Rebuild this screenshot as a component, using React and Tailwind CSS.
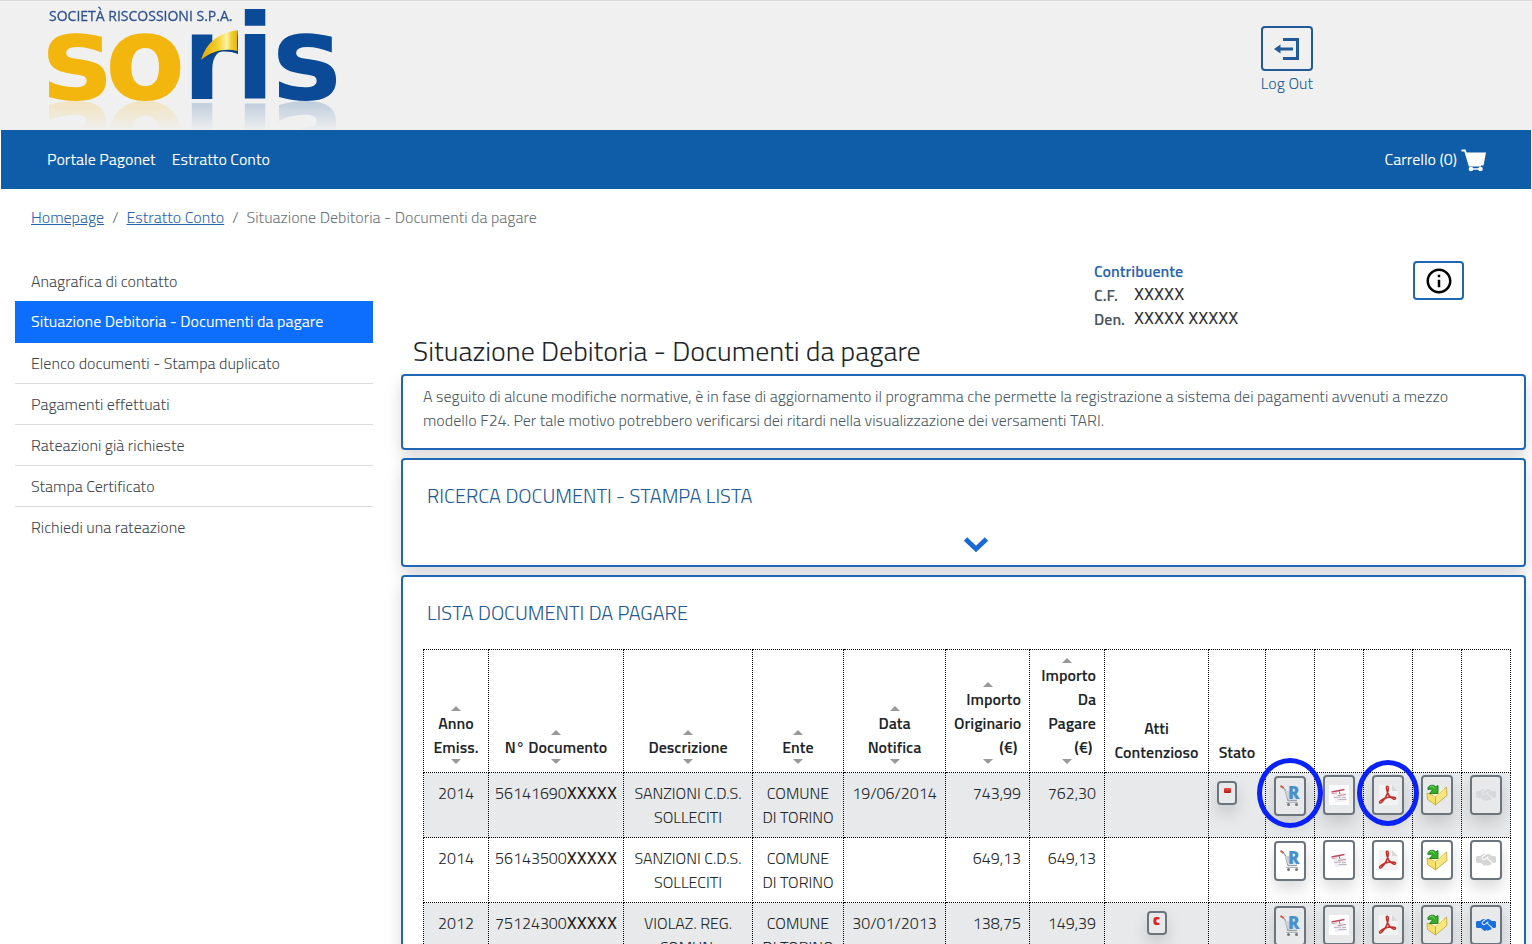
import { FaHandshakeSimple } from 'react-icons/fa6'
import { MdInfoOutline } from 'react-icons/md'

const menu = [
  'Anagrafica di contatto',
  'Situazione Debitoria - Documenti da pagare',
  'Elenco documenti - Stampa duplicato',
  'Pagamenti effettuati',
  'Rateazioni già richieste',
  'Stampa Certificato',
  'Richiedi una rateazione',
]

const columns = [
  { lines: ['Anno', 'Emiss.'], sort: true, align: 'text-center' },
  { lines: ['N° Documento'], sort: true, align: 'text-center' },
  { lines: ['Descrizione'], sort: true, align: 'text-center' },
  { lines: ['Ente'], sort: true, align: 'text-center' },
  { lines: ['Data', 'Notifica'], sort: true, align: 'text-center' },
  { lines: ['Importo', 'Originario', '(€)\u00a0'], sort: true, align: 'text-right' },
  { lines: ['Importo', 'Da', 'Pagare', '(€)\u00a0'], sort: true, align: 'text-right' },
  { lines: ['Atti', 'Contenzioso'], sort: false, align: 'text-center' },
  { lines: ['Stato'], sort: false, align: 'text-center' },
]

const rows = [
  { anno: '2014', num: '56141690', descr: 'SANZIONI C.D.S. SOLLECITI', ente: 'COMUNE DI TORINO', data: '19/06/2014', orig: '743,99', pagare: '762,30', stato: true, marked: true, deal: 'text-[#d6d9dc]' },
  { anno: '2014', num: '56143500', descr: 'SANZIONI C.D.S. SOLLECITI', ente: 'COMUNE DI TORINO', data: '', orig: '649,13', pagare: '649,13', deal: 'text-[#d6d6d6]' },
  { anno: '2012', num: '75124300', descr: 'VIOLAZ. REG. COMUN.', ente: 'COMUNE DI TORINO', data: '30/01/2013', orig: '138,75', pagare: '149,39', atti: true, deal: 'text-[#1a6fe0]' },
]

const cell = 'border border-dotted border-black'

function Logo() {
  return (
    <svg
      width="300"
      height="100"
      viewBox="0 0 300 100"
      role="img"
      aria-label="Soris - Società Riscossioni S.p.A."
      className="[-webkit-box-reflect:below_0px_linear-gradient(transparent_70%,rgba(255,255,255,0.22))]"
    >
      <defs>
        <linearGradient id="gold" x1="0" y1="0" x2="1" y2="0">
          <stop offset="0" stopColor="#e3a70c" />
          <stop offset="0.45" stopColor="#f4cf2a" />
          <stop offset="0.7" stopColor="#fdf3a8" />
          <stop offset="0.82" stopColor="#f0cf2e" />
          <stop offset="1" stopColor="#e0b017" />
        </linearGradient>
      </defs>
      <text x="9" y="20" fontFamily='"Open Sans", sans-serif' fontSize="14" fill="#2f5290" stroke="#2f5290" strokeWidth="0.300">SOCIETÀ RISCOSSIONI S.P.A.</text>
      <g fontFamily='"DejaVu Sans", sans-serif' fontWeight="700" fontSize="117">
        <g fill="#f2b60f">
          <text x="2" y="98">s</text>
          <text x="65" y="98">o</text>
        </g>
        <g fill="#0a4a96">
          <text x="142" y="98">r</text>
          <text x="195" y="98">i</text>
          <text x="232" y="98">s</text>
        </g>
      </g>
      <path d="M173 32L202 28V30H197.500V60H202V30L198 28V54C188 49 178 50 173 53Z" fill="#f0f0f0" />
      <path d="M163 56C173 38 183 33 198 30V53C188 49 176 50 172 55Z" fill="#0a3f80" />
      <path d="M161 59C166 42 178 32 198 29C197 37 197 44 197.500 50C186 47 173 49 161 59Z" fill="url(#gold)" />
    </svg>
  )
}

function LogOutIcon() {
  return (
    <svg width="26" height="24" viewBox="0 0 26 24" fill="none" aria-hidden="true">
      <path d="M9 2.500H23.500V21.500H9" stroke="#225a95" strokeWidth="3" />
      <path d="M5 12H19" stroke="#225a95" strokeWidth="3" />
      <path d="M0 12L6.500 7.500V16.500Z" fill="#225a95" />
    </svg>
  )
}

function CartIcon() {
  return (
    <svg width="26" height="23" viewBox="0 0 26 23" className="mt-1" aria-hidden="true">
      <path d="M0.500 1.500H4L8.500 16.500H20" fill="none" stroke="#fff" strokeWidth="1.800" />
      <path d="M4.500 3.500H25L22.500 16.500H8.500Z" fill="#fff" />
      <circle cx="10" cy="20" r="2.300" fill="#fff" />
      <circle cx="19.500" cy="20" r="2.300" fill="#fff" />
      <path d="M10 20H19" stroke="#fff" strokeWidth="1.500" />
    </svg>
  )
}

function Sort({ down }) {
  return (
    <svg width="10" height="5" viewBox="0 0 10 5" className="mx-auto block" aria-hidden="true">
      <path d={down ? 'M0 0H10L5 5Z' : 'M0 5H10L5 0Z'} fill="#999" />
    </svg>
  )
}

function CartRIcon() {
  return (
    <svg width="20" height="22" viewBox="0 0 20 22" aria-hidden="true">
      <path d="M2.500 2L5 4.500L8 15.500H17" fill="none" stroke="#9aa3ab" strokeWidth="1.300" />
      <path d="M5 6H17L16.500 13.500H7.500Z" fill="#c9d3dc" />
      <path d="M0.500 0.800L3.500 3" stroke="#d2604f" strokeWidth="2" />
      <text x="8" y="14" fontFamily='"Open Sans", sans-serif' fontWeight="800" fontSize="17" fill="#4a8fca">R</text>
      <path d="M6 17.500H18" stroke="#b4b9be" strokeWidth="1" />
      <circle cx="8.500" cy="19.500" r="1.500" fill="#777" />
      <circle cx="16.500" cy="19.500" r="1.500" fill="#777" />
    </svg>
  )
}

function BulletinIcon() {
  return (
    <svg width="20" height="20" viewBox="0 0 20 20" aria-hidden="true">
      <rect width="20" height="20" fill="#fdfdfd" />
      <path d="M4 9L15 6.500L18 15.500L6.500 17.500Z" fill="#f0eef2" />
      <path d="M2.500 7L15.500 4.500" stroke="#bf4a5e" strokeWidth="1.500" />
      <path d="M2.500 8.800L8 7.800" stroke="#d9a0aa" strokeWidth="1" />
      <path d="M10 6L11 9" stroke="#c05a6b" strokeWidth="1" />
      <path d="M9 10.500L17 9.500" stroke="#c28a98" strokeWidth="1" />
      <path d="M5 12.500L12 12M9.500 14.500L17.500 14.500M13 12.500H17" stroke="#b9b5c2" strokeWidth="1" />
    </svg>
  )
}

function PdfIcon() {
  return (
    <svg width="20" height="20" viewBox="0 0 20 20" aria-hidden="true">
      <path d="M1 0H14L20 6V20H1Z" fill="#f3f2f2" />
      <path d="M14 0V6H20Z" fill="#dadada" />
      <path d="M8.500 1.500C10.500 0.500 10.500 3 10 6C9 11 6 15 3.500 17.500C2 18.800 0.500 17.500 2.500 15.800C6 13 12 11.500 16.500 12.200C18.500 12.800 17.500 15 15.500 14C12 12.500 9.500 8.500 8.800 5C8.300 3 8 2 8.500 1.500Z" fill="none" stroke="#c2302c" strokeWidth="1.500" />
    </svg>
  )
}

function FolderIcon() {
  return (
    <svg width="22" height="22" viewBox="0 0 22 22" aria-hidden="true">
      <path d="M1 9L9.500 12L9.500 21L1.500 15.500Z" fill="#f5e06c" stroke="#c2a436" strokeWidth="0.800" />
      <path d="M9.500 12.500L20.500 3L21 11.500L9.500 21Z" fill="#f8e680" stroke="#c2a436" strokeWidth="0.800" />
      <path d="M12 7L16 4.500L18 5L9.500 12.500L4 9.500Z" fill="#fdf7cc" />
      <path d="M2 3.500C4 0.500 8.500 0.500 9.500 3L12 1.500V9.500H3.500L6 6.500C5 5 3.500 4.800 2 5.800Z" fill="#35ad28" stroke="#1d7a1b" strokeWidth="0.900" />
      <path d="M4 2.800C6 1.800 7.500 2.300 8.500 4.500" fill="none" stroke="#8fe07f" strokeWidth="0.900" />
    </svg>
  )
}

function ActionCell({ label, first, marked, children }) {
  return (
    <td className={`${cell} p-0 align-top`}>
      <div className={`relative flex justify-center ${first ? 'pt-[3px]' : 'pt-0.5'}`}>
        <button type="button" aria-label={label} className="flex h-10 w-8 items-center justify-center rounded border-2 border-[#6c757d] shadow-[0_8px_16px_rgba(0,0,0,0.15)]">
          {children}
        </button>
        {marked && (
          <span className={`pointer-events-none absolute left-1/2 z-10 -translate-x-1/2 rounded-[50%] border-[5px] border-[#0a22f5] ${first ? '-top-[15px] h-[70px] w-[66px]' : '-top-[13px] h-[66px] w-[62px]'}`} />
        )}
      </div>
    </td>
  )
}

function SmallButton({ label, children }) {
  return (
    <button type="button" aria-label={label} className="inline-flex h-6 w-5 items-start justify-center rounded border-2 border-[#6c757d] pt-0.5 align-top shadow-[0_8px_16px_rgba(0,0,0,0.15)]">
      {children}
    </button>
  )
}

function Panel({ className, children }) {
  return (
    <section className={`rounded border-2 border-[#1f67b5] bg-white shadow-[0_8px_16px_rgba(0,0,0,0.15)] ${className}`}>
      {children}
    </section>
  )
}

export default function App() {
  return (
    <div className="bg-white font-['Titillium_Web',Roboto,sans-serif] text-base leading-6 text-[#212529]">
      <header className="flex h-[130px] items-start justify-between border-t border-[#d9dcdf] bg-[#f0f0f0] pl-10 pr-[219px]">
        <Logo />
        <a href="#logout" className="flex flex-col items-center pt-[25px] font-light text-[#225a95]">
          <span className="flex h-[45px] w-[52px] items-center justify-center rounded border-2 border-[#225a95]">
            <LogOutIcon />
          </span>
          Log Out
        </a>
      </header>

      <nav className="relative mx-px flex h-[59px] items-center justify-between bg-[#0f5da9] pb-0.5 pl-[46px] pr-11 text-white">
        <div className="flex gap-4">
          <a href="#portale">Portale Pagonet</a>
          <a href="#estratto">Estratto Conto</a>
        </div>
        <a href="#carrello" className="flex items-center gap-1">
          Carrello (0)
          <CartIcon />
        </a>
      </nav>

      <ol className="mb-[30px] flex gap-2 px-[31px] pt-4 font-light text-[#6c757d]">
        <li><a href="#home" className="text-[#2a66b0] underline">Homepage</a></li>
        <li aria-hidden="true">/</li>
        <li><a href="#estratto" className="text-[#2a66b0] underline">Estratto Conto</a></li>
        <li aria-hidden="true">/</li>
        <li>Situazione Debitoria - Documenti da pagare</li>
      </ol>

      <div className="flex items-start gap-7 pl-[15px] pr-1.5">
        <ul className="w-[358px] shrink-0 pt-0.5">
          {menu.map((item, i) => (
            <li key={item}>
              <a
                href={`#menu-${i}`}
                className={`block px-4 py-2 ${i === 1 ? 'h-[42px] bg-[#0d6efd] text-white' : 'font-light text-[#3f474e]'} ${i > 1 && i < 6 ? 'border-b border-[#dcdcdc]' : ''}`}
              >
                {item}
              </a>
            </li>
          ))}
        </ul>

        <main className="min-w-0 flex-1">
          <div className="flex items-start justify-end pr-[62px]">
            <dl className="w-[319px] text-[#4c5560]">
              <dt className="font-semibold text-[#2a66b0]">Contribuente</dt>
              <dd className="flex">
                <span className="w-10 font-semibold">C.F.</span>
                <span className="font-['Roboto',sans-serif] text-[#333]">XXXXX</span>
              </dd>
              <dd className="flex">
                <span className="w-10 font-semibold">Den.</span>
                <span className="font-['Roboto',sans-serif] text-[#333]">XXXXX XXXXX</span>
              </dd>
            </dl>
            <button type="button" aria-label="Informazioni" className="mt-0.5 flex h-[39px] w-[51px] items-center justify-center rounded border-2 border-[#1f67b5] text-black">
              <MdInfoOutline size={30} />
            </button>
          </div>

          <h1 className="mb-[3px] pl-3 text-[28px] font-light leading-10">Situazione Debitoria - Documenti da pagare</h1>

          <div className="flex flex-col gap-2">
            <Panel className="px-5 pt-2 pb-4 font-light text-[#4c5a66]">
              <p>
                A seguito di alcune modifiche normative, è in fase di aggiornamento il programma che permette la registrazione a sistema dei pagamenti avvenuti a mezzo modello F24. Per tale motivo potrebbero verificarsi dei ritardi nella visualizzazione dei versamenti TARI.
              </p>
            </Panel>

            <Panel className="px-6 pt-6 pb-3">
              <h2 className="text-xl font-light leading-6 text-[#225a95]">RICERCA DOCUMENTI - STAMPA LISTA</h2>
              <div className="mt-7 flex justify-center pl-6">
                <button type="button" aria-label="Espandi ricerca" className="block">
                  <svg width="26" height="17" viewBox="0 0 26 17" fill="none" aria-hidden="true" className="block">
                    <path d="M2.500 3L13 13L23.500 3" stroke="#1a69d8" strokeWidth="4.800" />
                  </svg>
                </button>
              </div>
            </Panel>

            <Panel className="pt-6 pr-3.5 pb-6 pl-5">
              <h2 className="pl-1 text-xl font-light leading-6 text-[#225a95]">LISTA DOCUMENTI DA PAGARE</h2>
              <table className="mt-6 w-full table-fixed border-collapse">
                <colgroup>
                  <col className="w-[65px]" />
                  <col className="w-[135px]" />
                  <col className="w-[129px]" />
                  <col className="w-[91px]" />
                  <col className="w-[102px]" />
                  <col className="w-[84px]" />
                  <col className="w-[75px]" />
                  <col className="w-[104px]" />
                  <col className="w-[57px]" />
                  <col className="w-[49px]" />
                  <col className="w-[49px]" />
                  <col className="w-[49px]" />
                  <col className="w-[49px]" />
                  <col className="w-[49px]" />
                </colgroup>
                <thead>
                  <tr>
                    {columns.map((c) => (
                      <th key={c.lines.join(' ')} scope="col" className={`${cell} px-2 py-2 align-bottom font-semibold ${c.align}`}>
                        {c.sort && <Sort />}
                        {c.lines.map((l) => (
                          <span key={l} className="block whitespace-nowrap">{l}</span>
                        ))}
                        {c.sort && <Sort down />}
                      </th>
                    ))}
                    {['Rateizza', 'Bollettino', 'PDF', 'Apri', 'Accordo'].map((a) => (
                      <th key={a} scope="col" aria-label={a} className={cell} />
                    ))}
                  </tr>
                </thead>
                <tbody className="font-light">
                  {rows.map((r, i) => (
                    <tr key={r.num} className={`h-[65px] align-top text-center ${i % 2 === 0 ? 'bg-[#e7e9eb]' : 'bg-white'}`}>
                      <td className={`${cell} px-2 py-2`}>{r.anno}</td>
                      <td className={`${cell} whitespace-nowrap px-1 py-2`}>
                        {r.num}<span className="font-['Roboto',sans-serif] font-normal text-[#222]">XXXXX</span>
                      </td>
                      <td className={`${cell} px-2 py-2`}>{r.descr}</td>
                      <td className={`${cell} px-2 py-2`}>{r.ente}</td>
                      <td className={`${cell} px-2 py-2`}>{r.data}</td>
                      <td className={`${cell} px-2 py-2 text-right`}>{r.orig}</td>
                      <td className={`${cell} px-2 py-2 text-right`}>{r.pagare}</td>
                      <td className={`${cell} px-2 py-2`}>
                        {r.atti && (
                          <SmallButton label="Contenzioso">
                            <span aria-hidden="true" className="text-xs font-black leading-3 text-[#d9261c]">C</span>
                          </SmallButton>
                        )}
                      </td>
                      <td className={`${cell} px-2 py-2 text-left`}>
                        {r.stato && (
                          <SmallButton label="Stato documento">
                            <span className="mt-[3px] h-[5px] w-[7px] rounded-[1px] bg-linear-to-b from-[#f0504a] to-[#b00d0d]" />
                          </SmallButton>
                        )}
                      </td>
                      <ActionCell label="Aggiungi al carrello" first marked={r.marked}><CartRIcon /></ActionCell>
                      <ActionCell label="Bollettino"><BulletinIcon /></ActionCell>
                      <ActionCell label="Stampa PDF" marked={r.marked}><PdfIcon /></ActionCell>
                      <ActionCell label="Apri pratica"><FolderIcon /></ActionCell>
                      <ActionCell label="Accordo di rateazione"><FaHandshakeSimple size={20} className={r.deal} /></ActionCell>
                    </tr>
                  ))}
                </tbody>
              </table>
            </Panel>
          </div>
        </main>
      </div>
    </div>
  )
}
